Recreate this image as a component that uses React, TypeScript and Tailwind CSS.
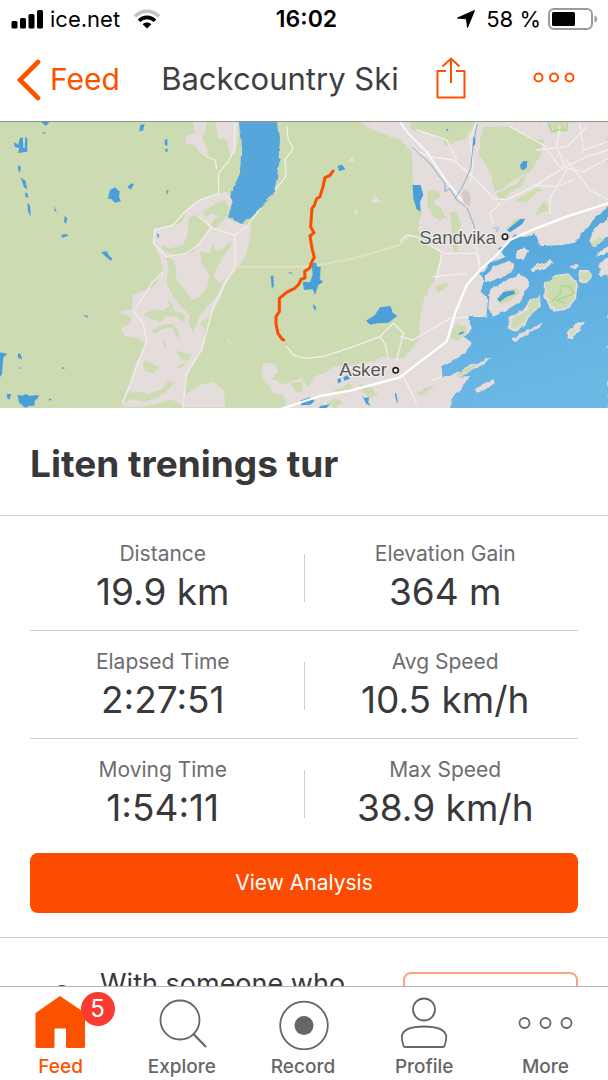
import type { ReactNode } from "react";

const stats = [
  [
    { label: "Distance", value: "19.9 km" },
    { label: "Elevation Gain", value: "364 m" },
  ],
  [
    { label: "Elapsed Time", value: "2:27:51" },
    { label: "Avg Speed", value: "10.5 km/h" },
  ],
  [
    { label: "Moving Time", value: "1:54:11" },
    { label: "Max Speed", value: "38.9 km/h" },
  ],
];

function StatusBar() {
  return (
    <div className="grid h-[38px] grid-cols-[1fr_auto_1fr] items-center pl-[11px] pr-[10px] text-[22px] text-black">
      <div className="flex items-center gap-[7px]">
        <svg width="32" height="20" viewBox="0 0 32 20" aria-hidden="true">
          <rect x="0.5" y="12" width="6" height="7.5" rx="1.5" />
          <rect x="9" y="9" width="6" height="10.5" rx="1.5" />
          <rect x="17.5" y="5" width="6" height="14.5" rx="1.5" />
          <rect x="26" y="1" width="6" height="18.5" rx="1.5" />
        </svg>
        <span>ice.net</span>
        <svg className="ml-1" width="32" height="20" viewBox="0 0 28 20" fill="none" aria-hidden="true">
          <path d="M2 7.5C8.5 0.5 19.5 0.5 26 7.5" stroke="#c3c3c3" strokeWidth="3.6" />
          <path d="M6 11.8C10.5 7.2 17.5 7.2 22 11.8" stroke="#000" strokeWidth="3.6" />
          <path d="M14 19.5L9.6 15.2C12 12.9 16 12.9 18.4 15.2Z" fill="#000" />
        </svg>
      </div>
      <span className="pl-1 text-[23px] font-semibold">16:02</span>
      <div className="flex items-center justify-end gap-[7px]">
        <svg className="mr-1" width="18" height="18" viewBox="0 0 18 18" aria-hidden="true">
          <path d="M17.500 0.500L10.500 17.500L9.500 8.800L0.500 8Z" stroke="#000" strokeWidth="1" strokeLinejoin="round" />
        </svg>
        <span>58 %</span>
        <svg width="50" height="22" viewBox="0 0 50 22" fill="none" aria-hidden="true">
          <rect x="1" y="1" width="43" height="20" rx="5" stroke="#9b9b9b" strokeWidth="2" />
          <rect x="4" y="4" width="23" height="14" rx="1.5" fill="#000" />
          <path d="M46.5 7.5C50 8.5 50 13.5 46.5 14.5Z" fill="#9b9b9b" />
        </svg>
      </div>
    </div>
  );
}

function NavBar() {
  return (
    <div className="flex h-[83px] items-center pl-4 pr-[33px] text-[#fc5200]">
      <a href="#feed" className="flex items-center gap-[9px] text-[30px]">
        <svg width="25" height="42" viewBox="0 0 25 42" fill="none" stroke="currentColor" strokeWidth="4.6" strokeLinecap="round" aria-hidden="true">
          <path d="M22 3L4 21L22 39" />
        </svg>
        Feed
      </a>
      <h1 className="flex-1 pl-1 text-center text-[31px] text-[#3f3f42]">Backcountry Ski</h1>
      <button aria-label="Share" className="-mt-1">
        <svg width="30" height="42" viewBox="0 0 30 42" fill="none" stroke="currentColor" strokeWidth="2">
          <path d="M10 14H1.500V40.500H28.500V14H20" strokeLinejoin="round" />
          <path d="M15 26V1.500M6.500 9.500L15 1.500L23.500 9.500" />
        </svg>
      </button>
      <button aria-label="More options" className="-mt-1 ml-[67px]">
        <svg width="42" height="12" viewBox="0 0 42 12" fill="none" stroke="currentColor" strokeWidth="2">
          <circle cx="5.5" cy="5.5" r="4" />
          <circle cx="21" cy="5.5" r="4" />
          <circle cx="36.5" cy="5.5" r="4" />
        </svg>
      </button>
    </div>
  );
}

function RouteMap() {
  return (
    <svg viewBox="0 6 1824 858" className="block w-full" role="img" aria-label="Route map">
      <defs>
        <filter id="rough" filterUnits="userSpaceOnUse" x="0" y="0" width="1824" height="870">
          <feTurbulence type="fractalNoise" baseFrequency="0.045" numOctaves="2" seed="4" />
          <feDisplacementMap in="SourceGraphic" scale="14" xChannelSelector="R" yChannelSelector="G" />
        </filter>
        <linearGradient id="sea" x1="0" y1="0" x2="0.25" y2="1">
          <stop offset="0" stopColor="#4f9fd9" />
          <stop offset="0.5" stopColor="#5eafe0" />
          <stop offset="1" stopColor="#6cb8e5" />
        </linearGradient>
      </defs>
      <rect width="1824" height="870" fill="#ccdbb2" />

      {/* valley settlements */}
      <g transform="translate(330 0)" fill="#e4dddb">
        <path d="M248 0H290L288 35L275 50L293 90L292 112L268 100L258 75L228 72L226 48L255 38ZM315 0H385V40L378 100L360 108L350 60L325 55ZM345 18l15 0 0 30-12-5z" />
        <path d="M232 268L255 245L325 222L350 215L372 235L360 262L352 295L390 310L425 318L418 370L405 410L378 452L350 485L325 550L298 590L268 610L285 625L278 690L245 735L225 785L222 825L270 795L310 785L342 810L345 862H225L185 838L150 850L110 858L40 862L33 845L60 790L75 735L106 670L85 655L45 648L32 625L60 612L66 595L28 575L65 568L68 525L130 502L160 455L150 410L132 375L130 325L150 325L190 318L215 305Z" />
      </g>
      <g transform="translate(330 0)" fill="#ccdbb2">
        <path d="M236 295L262 280L280 300L298 325L272 360L250 395L205 408L165 395L150 375L180 385L220 375L232 345Z" />
        <path d="M275 278L320 250L345 240L358 262L348 292L318 325L300 315L325 285L305 280L288 290Z" />
        <path d="M270 395L300 400L308 370L320 395L345 380L365 360L358 385L340 410L322 440L310 470L330 490L345 475L320 530L290 560L268 590L250 640L235 610L240 585L215 560L190 530L170 490L175 440L168 410L190 420L200 450L198 480L225 510L245 540L270 530L292 500L298 465L275 430Z" />
        <path d="M100 585l30-18 30 5 20-15-12-20 20 15 5 20 30 10 0 25-22-15-30-5-20 20-30-12zM125 630l30-15 40-5-8 12-30 5-22 15zM185 615l15 10 12 35-14-12zM160 650l10 25-8 8zM105 720l20 10 22 10-15 20-25-8-8-15zM200 740l35-18-22-5-18-25 50 10-10 20-25 25zM60 815l30 0 25 8 40-15 20-25 18 5-22 25-30 20-40 12-40-8-15 12-10-15z" />
      </g>

      {/* built-up land */}
      <g fill="#e4dddb" filter="url(#rough)">
        <path d="M790 725L830 735L835 755L815 775L850 790L905 775L925 800L945 770L980 755L1010 740L1100 730L1150 710L1210 718L1260 660L1258 600L1270 540L1300 480L1325 400L1290 365L1250 330L1265 270L1240 190L1236 100L1200 60L1120 30L1075 6H1824V870H860L850 825L820 820L785 765Z" />
        <path d="M1050 110l12 2-2 18-10-2zM1125 222l15 24-24 6zM1070 262l12 10-8 14-8-8zM685 655l10 12-8 8z" />
      </g>

      {/* woods inside the built-up land */}
      <g fill="#ccdbb2" filter="url(#rough)">
        <path d="M1220 0H1430L1400 52L1345 76L1290 40L1240 30Z" />
        <path d="M1440 70L1450 20L1530 20L1600 55L1632 60L1620 110L1595 150L1540 180L1520 200L1485 210L1465 150L1435 100Z" />
        <path d="M1645 0L1700 6L1695 35L1660 36Z" />
        <path d="M1545 245l60-40 25 0-50 40zM1605 275l30-30 12 25-38 15zM1280 215l35-5 10 15-25 20 25 20 15 30-20 10-25-20-15-30zM1350 280l20-5 15 40-15 20 5 60-15 0-5-60zM1490 220l60-30 30-30-10 35-40 25-30 25z" />
        <path d="M1520 320l40-28 10 8-35 25z" />
        <path d="M1305 500l35-15 5 8-30 25zM1355 630l20-18 25 8-5 25-20 15-22-8zM1250 820l50-25-10 15-30 16zM1075 790l40 15 20 20-30 10zM980 850l30-15 20 15-25 15zM870 790l30-5 10 25-25 5zM1000 815l50-25 10 12-40 20z" />
      </g>

      {/* minor roads */}
      <g fill="none" stroke="#f3eee7" strokeWidth="4" strokeLinejoin="round" strokeLinecap="round">
        <path d="M705 10L702 90L685 125L655 160L656 220L600 240L550 280L520 315L465 330L460 370L500 410L560 400L600 370L635 320L590 285M620 110L645 120L650 145M640 325L705 345L705 440L670 500L640 560L605 690L560 760L548 864M490 455L455 490L400 575L430 610L440 665L410 740L370 845M860 20L865 60L880 85L855 120L858 170L800 240L740 320L705 345" />
        <path d="M860 680L880 705L915 715L970 710L1060 680L1140 650L1180 610L1210 640L1190 720M1140 650L1155 670L1165 718" />
        <path d="M710 440L930 440L1060 415L1200 375L1230 345" stroke="#e2dfc5" strokeWidth="7" />
        <path d="M1200 6L1225 40L1280 95L1340 185L1385 240L1400 262" stroke="#faf7f5" strokeWidth="6" />
        <path d="M1240 90L1290 110L1360 120L1430 180L1480 235L1520 240L1600 200L1680 150L1760 110L1824 90" stroke="#f5f1ee" />
        <path d="M1250 30L1340 60L1370 120M1430 6L1410 60L1420 130L1410 190M1530 20L1630 75L1680 140L1750 155L1824 115M1680 20L1670 80L1700 150L1650 235L1650 280M1610 90L1700 80L1760 20M1740 10L1750 90L1824 65M1720 180L1670 200L1600 195M1700 120L1770 210L1824 240M1500 250L1470 280L1480 310M1250 350L1330 400L1430 400L1440 450M1325 400L1310 480M1300 470L1400 460M1200 650L1240 660L1350 595L1440 590M1300 780L1350 760M1210 770L1250 850M1400 345L1425 370L1440 430" stroke="#f3efed" />
        <path d="M1250 350L1220 345L1200 365" />
      </g>

      {/* fjord */}
      <path
        filter="url(#rough)"
        fill="url(#sea)"
        d="M1824 262L1790 288L1755 330L1725 368L1690 375L1622 378L1605 338L1580 350L1542 345L1525 372L1495 390L1518 408L1470 430L1440 462L1455 482L1442 512L1465 540L1458 592L1408 590L1412 625L1395 650L1412 670L1395 702L1325 738L1328 772L1410 768L1385 805L1360 830L1345 870H1824Z"
      />
      <path d="M1520 330L1560 298L1575 296L1567 312L1530 337Z" fill="#4a9fdb" />

      {/* islands */}
      <g filter="url(#rough)" fill="#e4dddb">
        <path d="M1455 465L1480 440L1530 422L1542 440L1530 462L1470 485L1455 480Z" />
        <path d="M1470 510L1510 485L1560 460L1588 485L1575 515L1560 545L1520 570L1480 590L1465 565Z" />
        <path d="M1520 620L1530 590L1570 570L1590 540L1620 525L1622 560L1590 585L1575 615L1545 635Z" />
        <path d="M1550 392l25-10 10 12-15 22-18 2z" />
        <path d="M1592 448l20-14 40-14 10 10-40 20-25 6zM1708 440l20-12 12 8-20 12zM1635 490l30-25 40-5 28 30-5 50-30 30-40 5-25-40zM1740 450l25 0 12 15-18 25-22-5z" />
        <path d="M1765 365l15-35 20-20 24-10v45l-40 30zM1795 400l35-25v18l-38 20zM1798 430l30-20v55l-28 5z" />
        <path d="M1700 640l30-30 25-5-15 25-22 25-16-3zM1535 655l60-30 35-18-10 15-75 42zM1422 808l60-32 5 14-30 20-30 8zM1330 782l90-50 55-20-20 20-60 30-50 20z" />
      </g>
      <g filter="url(#rough)" fill="#ccdbb2">
        <path d="M1488 535L1515 510L1550 505L1560 522L1530 545L1495 552Z" />
        <path d="M1528 618L1540 590L1580 575L1595 540L1618 530L1615 560L1580 590L1572 610L1545 628Z" />
        <path d="M1638 490L1665 468L1703 464L1728 490L1724 538L1695 565L1665 570L1640 530Z" />
        <path d="M1745 455l25 2 5 12-18 15-16-5zM1770 372l30-22 10 10-30 20zM1710 640l20-18-5 20-14 5zM1380 755l50-22-12 15-50 22zM1600 445l40-16-15 12z" />
      </g>
      <g fill="#4a9fdb">
        <path d="M1492 538L1510 516L1542 511L1545 522L1520 530L1500 545Z" />
        <path d="M1376 640l14-6 2 5-14 6z" />
      </g>
      <path d="M1655 545L1680 520L1685 498H1710L1722 520L1670 540L1695 550" fill="none" stroke="#a9d68c" strokeWidth="4" />
      <path d="M1645 8L1655 35L1680 28L1700 32L1702 8" fill="none" stroke="#a9d68c" strokeWidth="4" />

      {/* lakes */}
      <path fill="#56a6dc" filter="url(#rough)" d="M720 0H833L840 55L832 170L820 222L755 292L725 312L684 292L700 240L692 220L720 160L725 70Z" />
      <g fill="#4a9fdb">
        <path d="M935 430L948 428L952 440L962 440L960 478L970 486L955 495L945 525L938 508L912 510L908 485L930 487L938 465Z" />
        <path d="M1098 602L1125 585L1140 562L1172 558L1178 578L1192 588L1165 608L1132 610L1110 614Z" />
        <path d="M1238 195L1262 195L1270 225L1260 245L1262 275L1250 268L1240 235Z" />
        <path d="M1560 135l10-12 12 0-2 20-10 8-8-5z" />
        <path d="M1012 138l14-4 10 14-18 6zM812 468l8-2 2 30-6 12zM940 552l8 8 0 12-8-8z" />
        <path d="M330 210l15-8 8 8 6 4-2 18 6 12-18 4-12-12-10 0 5-16zM382 202l12-12 8 3-10 16zM420 15l14-4-4 20-12 4zM494 60l8-4 0 22-8-4zM496 86h7v9h-7z" />
        <path d="M120 4h30l-12 14zM125 36l14 2-8 4zM42 66l12 8 6-20 8-2 2 32h4l2-34 6 5 0 40-28 4 4-14-14-4zM55 135l8 6-3 18-6-10zM62 172l14 10 6 26-10-6zM76 216l8 6 0 12-8-4zM82 248l8 8 2 34-8-16zM162 255l8 22-6-4zM194 288l8 6-4 18-6-8zM184 344l16-2 4 6-18 5z" />
        <path d="M303 396l18-2 4 10 12 12-4 6-14-10zM250 584l14 4-2 6zM54 700l8 2 4 16-12-4zM0 697l22 4-12 12-4 50-6 8zM54 744l8-2 0 5zM188 740l7 5-8 3zM20 822l14 0-6 18-6-6zM52 826l20 0 4-5 12 6 28-2-2 10-10 8 0 14-14 0-14 6-18-14zM146 835l10 4-8 3zM470 338l8 8-4 10zM500 208l6 6-6 12zM864 458l14-2-8 6z" />
        <path d="M900 842l30-10 14 10-12 12-28 2zM960 858l30-5-12 12h-22zM1085 826l8 8 14-2-2 16 8 10-14-6zM1012 778l10-4 2 12-10 4zM1030 772l12-6 8 10-18 6zM1184 820l5 0 5 30-5-6zM1336 26l10 2-4 6z" />
      </g>

      {/* rivers */}
      <g fill="none" stroke="#84afd2" strokeWidth="3" strokeLinejoin="round">
        <path d="M1236 82L1290 130L1315 165L1335 190L1335 215L1350 205L1370 240L1400 262L1412 290L1425 325" />
        <path d="M1432 10L1420 70L1412 145L1385 205L1365 235" />
        <path d="M1478 326L1495 320L1488 335L1500 325" stroke="#aabfdb" />
      </g>
      <path d="M1420 52l6 0 0 20-8 8z" fill="#4a9fdb" />
      <path d="M1385 215L1400 208L1412 230L1410 258L1390 252Z" fill="#d6cac6" />

      {/* motorway */}
      <path
        d="M840 868L960 828L1050 812L1200 772L1260 725L1340 665L1348 640L1365 580L1400 495L1445 445L1490 405L1530 360L1600 328L1700 290L1824 250"
        fill="none"
        stroke="#fff"
        strokeWidth="7"
        strokeLinejoin="round"
      />

      {/* recorded route */}
      <path
        d="M999 153L990 166L975 173L969 200L960 230L950 236L942 258L936 265L932 320L942 338L930 348L936 385L943 412L934 428L930 443L914 454L915 474L903 478L897 492L884 505L860 517L838 535L838 575L828 590L828 612L834 640L845 656L851 660"
        fill="none"
        stroke="#fc4c02"
        strokeWidth="9"
        strokeLinejoin="round"
        strokeLinecap="round"
      />

      <g fontFamily='"Liberation Sans", Arial, sans-serif' fontSize="56" fill="#55555a" stroke="#f4f1ec" strokeWidth="6" paintOrder="stroke" strokeLinejoin="round">
        <text x="1258" y="371">Sandvika</text>
        <text x="1018" y="769">Asker</text>
      </g>
      <g fill="#fff" stroke="#222" strokeWidth="5">
        <circle cx="1515" cy="350" r="8" />
        <circle cx="1187" cy="751" r="8" />
      </g>
    </svg>
  );
}

function Stat({ label, value }: { label: string; value: string }) {
  return (
    <div className="flex-1 text-center">
      <dt className="text-[21px] leading-6 text-[#6d6d70]">{label}</dt>
      <dd className="mt-1 text-[37px] leading-11 text-[#39393b]">{value}</dd>
    </div>
  );
}

function Tab({ label, active, children }: { label: string; active?: boolean; children: ReactNode }) {
  return (
    <a
      href={`#${label.toLowerCase()}`}
      aria-current={active ? "page" : undefined}
      className={`flex flex-1 flex-col items-center gap-[5px] pt-[7px] text-[19px] leading-6 font-medium ${active ? "text-[#fc5200]" : "text-[#666668]"}`}
    >
      <span className="relative">{children}</span>
      {label}
    </a>
  );
}

function TabBar() {
  return (
    <nav className="flex h-[94px] shrink-0 border-t border-[#b4b4b6] bg-white pr-0.5">
      <Tab label="Feed" active>
        <svg width="56" height="56" viewBox="0 0 56 56" fill="currentColor" aria-hidden="true">
          <path d="M27 2L52 19V52.500Q52 54 50.500 54H34.500Q33 54 33 52.500V34.500H21.500V52.500Q21.500 54 20 54H4Q2.500 54 2.500 52.500V19Z" />
        </svg>
        <span className="absolute -top-0.5 left-12 flex h-[34px] w-[34px] items-center justify-center rounded-full bg-[#fc3b30] text-[24px] font-normal text-white">
          5
        </span>
      </Tab>
      <Tab label="Explore">
        <svg width="56" height="56" viewBox="0 0 56 56" fill="none" stroke="currentColor" strokeWidth="1.8" aria-hidden="true">
          <circle cx="26" cy="26" r="19.500" />
          <path d="M39 39.500L52 53" strokeWidth="2.200" />
        </svg>
      </Tab>
      <Tab label="Record">
        <svg width="56" height="56" viewBox="0 0 56 56" fill="none" stroke="currentColor" strokeWidth="1.8" aria-hidden="true">
          <circle cx="29" cy="31.500" r="23.800" />
          <circle cx="29" cy="31.500" r="9.500" fill="currentColor" stroke="none" />
        </svg>
      </Tab>
      <Tab label="Profile">
        <svg width="56" height="56" viewBox="0 0 56 56" fill="none" stroke="currentColor" strokeWidth="1.8" aria-hidden="true">
          <circle cx="28" cy="15.500" r="11" />
          <path d="M9 53Q8 53 7.600 52C6 48 5.800 45 5.800 42C7 35.500 16 32.500 28 32.500S49 35.500 50.300 42C50.300 45 50 48 48.500 52Q48 53 47 53Z" />
        </svg>
      </Tab>
      <Tab label="More">
        <svg width="56" height="56" viewBox="0 0 56 56" fill="none" stroke="currentColor" strokeWidth="1.8" aria-hidden="true">
          <circle cx="7.500" cy="29" r="5" />
          <circle cx="28.500" cy="29" r="5" />
          <circle cx="49.500" cy="29" r="5" />
        </svg>
      </Tab>
    </nav>
  );
}

export default function App() {
  return (
    <div className="flex h-screen flex-col bg-white font-[Inter,sans-serif]">
      <header className="shrink-0 border-b border-[#8d9488]">
        <StatusBar />
        <NavBar />
      </header>

      <main className="min-h-0 flex-1 overflow-y-auto [scrollbar-width:none]">
        <RouteMap />

        <h2 className="border-b border-[#cfcfd1] px-[30px] pt-[34px] pb-[29px] text-[37px] leading-11 font-bold text-[#38383a]">
          Liten trenings tur
        </h2>

        {/* Stats */}
        <section className="px-[30px] pt-[7px] pb-6">
          {stats.map((row) => (
            <dl
              key={row[0].label}
              className="flex border-b border-[#cfcfd1] pt-[19px] pb-4 last-of-type:border-b-0"
            >
              <div className="flex flex-1 pr-2">
                <Stat {...row[0]} />
              </div>
              <div className="my-3 w-px bg-[#cfcfd1]" />
              <div className="flex flex-1 pl-2">
                <Stat {...row[1]} />
              </div>
            </dl>
          ))}
          <button className="mt-[7px] h-[60px] w-full rounded-lg bg-[#fc4c02] text-[21px] text-white">
            View Analysis
          </button>
        </section>

        {/* Add others */}
        <section className="flex items-start border-t border-[#cfcfd1] px-[30px] pt-[34px]">
          <svg className="mt-3 ml-[18px] shrink-0" width="28" height="40" viewBox="0 0 28 40" fill="none" stroke="#39393b" strokeWidth="2" aria-hidden="true">
            <circle cx="14" cy="9" r="7" />
            <path d="M2 36C2 24 26 24 26 36Z" />
          </svg>
          <p className="-mt-0.5 ml-6 flex-1 text-[27px] leading-7 text-[#39393b]">With someone who</p>
          <button aria-label="Add others" className="h-[60px] w-[175px] rounded-lg border-2 border-[#fca47f]" />
        </section>
      </main>

      <TabBar />
    </div>
  );
}
